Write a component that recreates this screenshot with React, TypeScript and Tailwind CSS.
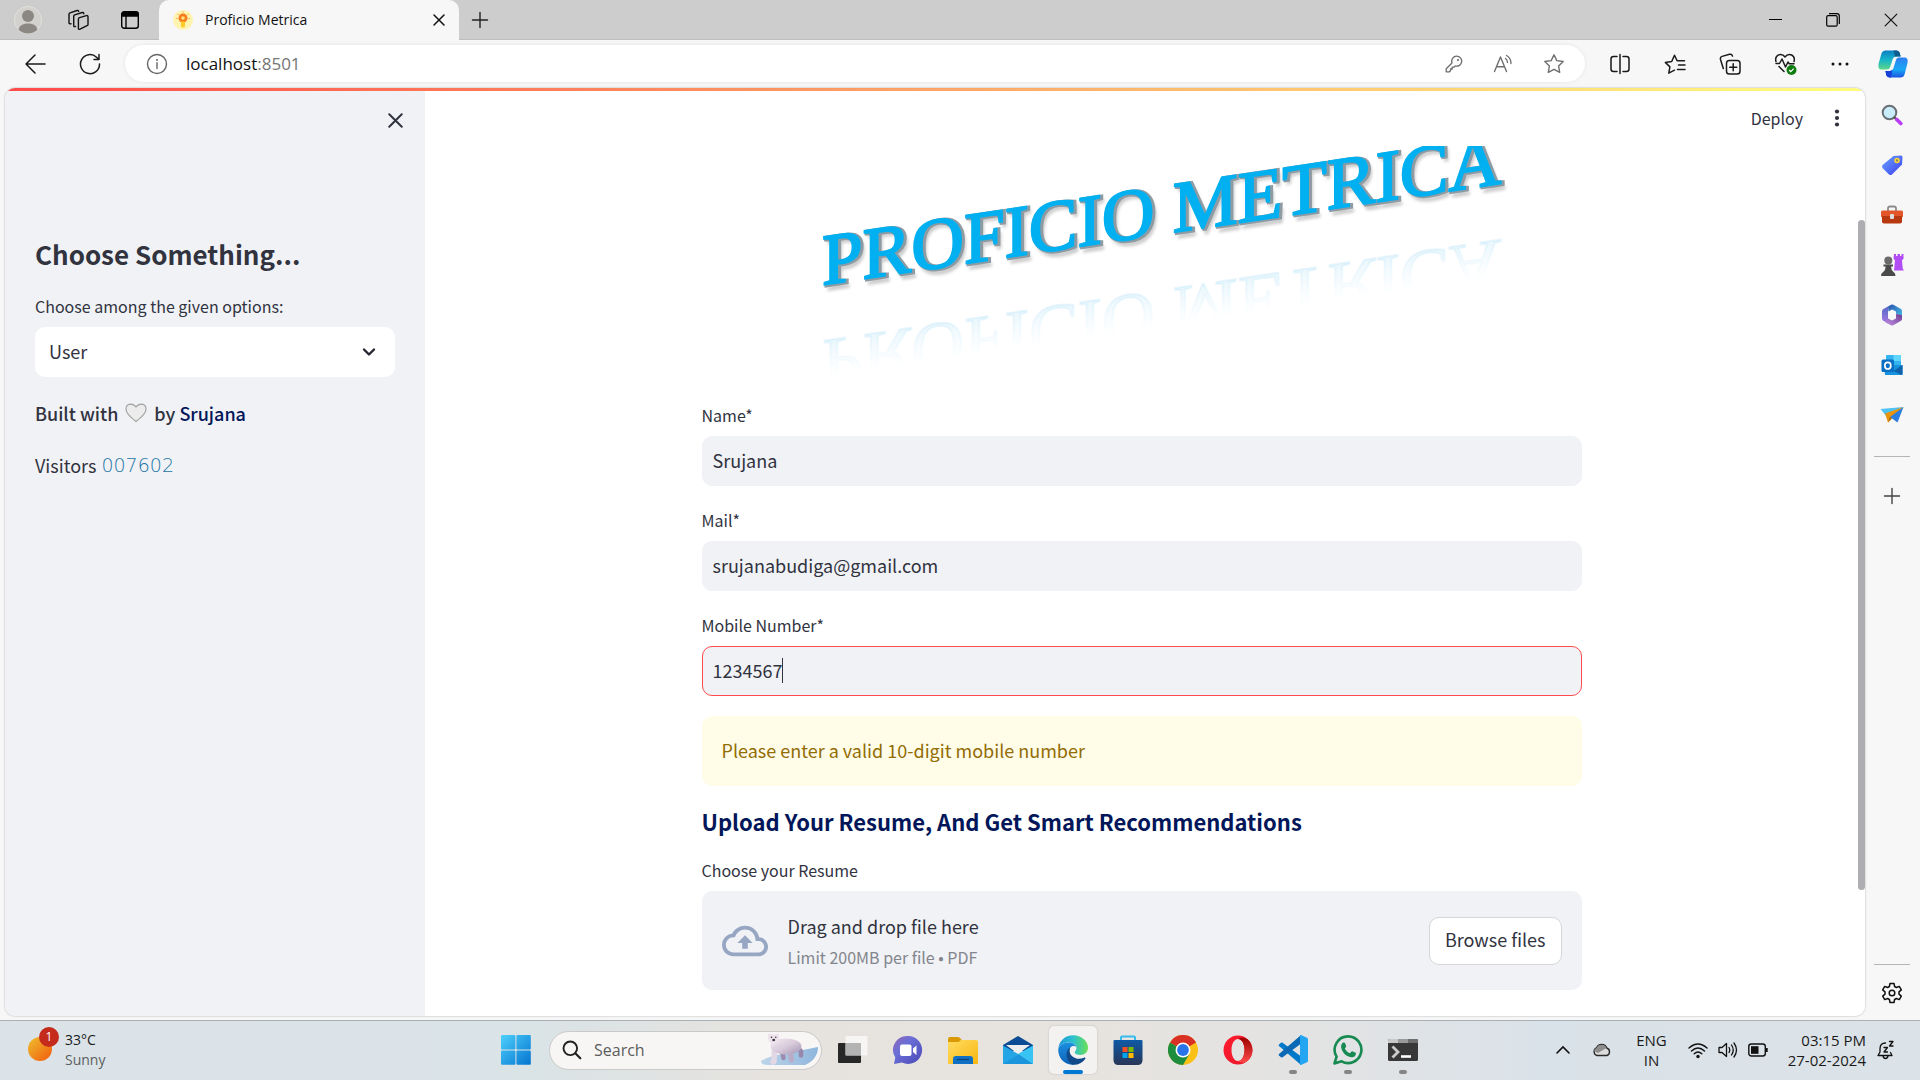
import React, { ReactNode } from "react";

type IconProps = { className?: string };

function Svg({ size, vb, label, className = "", children }: { size: number; vb?: string; label?: string; className?: string; children: ReactNode }) {
  return (
    <svg width={size} height={size} viewBox={vb ?? "0 0 24 24"} fill="none" className={"shrink-0 " + className} role={label ? "img" : undefined} aria-label={label} aria-hidden={label ? undefined : true}>
      {children}
    </svg>
  );
}

/* ---------- browser chrome ---------- */

function Avatar() {
  return (
    <Svg size={28} vb="0 0 28 28">
      <circle cx="14" cy="14" r="13.5" fill="#d3d1cd" stroke="#e2e0dc" />
      <circle cx="14" cy="10" r="6" fill="#8b8783" />
      <path d="M4.500 23.500C6 18.800 9.500 17.500 14 17.500S22 18.800 23.500 23.500A13.300 13.300 0 0 1 4.500 23.500Z" fill="#8b8783" />
    </Svg>
  );
}

function WorkspacesIcon() {
  return (
    <Svg size={22} vb="0 0 22 22">
      <g stroke="#111" strokeWidth="1.400" strokeLinejoin="round" strokeLinecap="round">
        <path d="M12.500 8.600 19.500 6.600q1.500-.3 1.500 1.200v7.600q0 1-1 1.300l-7 3.500q-1.600.6-1.600-1V10q0-1 1.100-1.400Z" />
        <path d="M8.500 17.500q-1.800.6-1.800-1V7.200q0-1 1-1.400l7.500-2.300q1.500-.3 1.600 1.200" />
        <path d="M4 14.800q-2 .4-2-1.100V5.200q0-1 1-1.400L10 1.500q1.400-.3 1.700.9" />
      </g>
    </Svg>
  );
}

function TabActionsIcon() {
  return (
    <Svg size={20} vb="0 0 20 20">
      <rect x="1.700" y="1.700" width="16.600" height="16.600" rx="2.500" stroke="#000" strokeWidth="1.400" />
      <path d="M1.500 6.800V4Q1.500 1.500 4 1.500h12q2.500 0 2.500 2.500v2.800Z" fill="#000" />
      <path d="M6 6v12" stroke="#000" strokeWidth="1.400" />
    </Svg>
  );
}

function BulbFavicon() {
  return (
    <Svg size={20} vb="0 0 20 20">
      <circle cx="10" cy="10" r="10" fill="#fff3b0" />
      <circle cx="10" cy="8" r="4.500" fill="#f57c1f" />
      <path d="M8 11.500h4v4.500q0 1.500-2 1.500t-2-1.500Z" fill="#ffc928" />
      <circle cx="10" cy="8" r="1.800" fill="#ffe27a" />
      <path d="M10 1.500v1M4.500 4l.8.8M15.500 4l-.8.8M3.500 8.500h1M15.500 8.500h1" stroke="#f57c1f" />
    </Svg>
  );
}

function CloseIcon({ size, w = 1.5, color = "#111" }: { size: number; w?: number; color?: string }) {
  return (
    <Svg size={size} vb="0 0 12 12">
      <path d="M1 1l10 10M11 1L1 11" stroke={color} strokeWidth={w} strokeLinecap="round" />
    </Svg>
  );
}

function PlusIcon({ color = "#222" }: { color?: string }) {
  return (
    <Svg size={18} vb="0 0 18 18">
      <path d="M9 1.500v15M1.500 9h15" stroke={color} strokeWidth="1.400" strokeLinecap="round" />
    </Svg>
  );
}

function BackIcon() {
  return (
    <Svg size={22} vb="0 0 22 22">
      <path d="M11 2 2 11l9 9M2 11h19" stroke="#1b1b1b" strokeWidth="1.500" strokeLinecap="round" strokeLinejoin="round" />
    </Svg>
  );
}

function ReloadIcon() {
  return (
    <Svg size={22} vb="0 0 22 22">
      <path d="M20.500 11A9.500 9.500 0 1 1 17.500 4.200L20 6.500M20 1.500v5h-5" stroke="#1b1b1b" strokeWidth="1.500" strokeLinecap="round" strokeLinejoin="round" />
    </Svg>
  );
}

function InfoIcon() {
  return (
    <Svg size={22} vb="0 0 22 22">
      <circle cx="11" cy="11" r="9.500" stroke="#666" strokeWidth="1.400" />
      <path d="M11 9.800V15.500" stroke="#666" strokeWidth="1.400" strokeLinecap="round" />
      <circle cx="11" cy="7" r="1" fill="#666" />
    </Svg>
  );
}

function KeyIcon() {
  return (
    <Svg size={18} vb="0 0 18 18">
      <path d="M11.700 1.200a5 5 0 1 1-1.400 9.800L9 12.200H7.200V14H5.500v1.700L4.500 16.800H1.200V13.800L7 8a5 5 0 0 1 4.700-6.800Z" stroke="#6e6e6e" strokeWidth="1.300" strokeLinejoin="round" />
      <circle cx="13" cy="5" r="1.100" fill="#6e6e6e" />
    </Svg>
  );
}

function ReadAloudIcon() {
  return (
    <Svg size={20} vb="0 0 20 20">
      <path d="M1.500 17.500 7.500 3l6 14.500M3.500 12.800h8" stroke="#6e6e6e" strokeWidth="1.400" strokeLinecap="round" strokeLinejoin="round" />
      <path d="M12.500 4.500q2 1.500 2 4M13.500 1.500q4.500 2.500 4.500 8" stroke="#6e6e6e" strokeWidth="1.300" strokeLinecap="round" />
    </Svg>
  );
}

function StarIcon() {
  return (
    <Svg size={22} vb="0 0 22 22">
      <path d="m11 1.800 2.800 5.800 6.400.9-4.600 4.500 1.100 6.300-5.700-3-5.700 3 1.100-6.300L1.800 8.500l6.400-.9Z" stroke="#6e6e6e" strokeWidth="1.400" strokeLinejoin="round" />
    </Svg>
  );
}

function SplitIcon() {
  return (
    <Svg size={22} vb="0 0 22 22">
      <g stroke="#1b1b1b" strokeWidth="1.500" strokeLinecap="round">
        <path d="M8 3.500H4.500q-2.500 0-2.500 2.500v10q0 2.500 2.500 2.500H8M14 3.500h3.500q2.500 0 2.500 2.500v10q0 2.500-2.500 2.500H14M11 1.500v19" />
      </g>
    </Svg>
  );
}

function FavoritesIcon() {
  return (
    <Svg size={22} vb="0 0 22 22">
      <g stroke="#1b1b1b" strokeWidth="1.500" strokeLinecap="round" strokeLinejoin="round">
        <path d="m10.500 17.200-5.700 3 1.100-6.300L1.300 9.400l6.400-.9 2.800-6.200 2.600 5.500h7.400M14.500 12h6.500M13.500 16.500h7.500" />
      </g>
    </Svg>
  );
}

function CollectionsIcon() {
  return (
    <Svg size={22} vb="0 0 22 22">
      <g stroke="#1b1b1b" strokeWidth="1.500" strokeLinecap="round" strokeLinejoin="round">
        <rect x="7.500" y="7.500" width="13.500" height="13.500" rx="2.800" />
        <path d="M14.200 10.800v7M10.700 14.300h7M4.300 15.500 1.500 6.500q-.6-2.400 1.600-3.100L10.500 1.300q2.300-.6 3 1.800" />
      </g>
    </Svg>
  );
}

function HealthIcon() {
  return (
    <Svg size={24} vb="0 0 24 24">
      <path d="M2 9.500C.8 5.500 3.200 2.500 6.500 2.500c2 0 3.500 1 4.500 2.500 1-1.500 2.500-2.500 4.500-2.500 3.300 0 5.700 3 4.500 7M5 14.500l5 5M2 11.500h3.500L8 7l3.500 8L14 10l1.200 1.800H20" stroke="#1b1b1b" strokeWidth="1.500" strokeLinecap="round" strokeLinejoin="round" />
      <circle cx="17.500" cy="18" r="5" fill="#107c10" />
      <path d="m15.200 18 1.600 1.600 2.900-2.900" stroke="#fff" strokeWidth="1.200" />
    </Svg>
  );
}

function CopilotIcon() {
  return (
    <Svg size={32} vb="0 0 32 32" label="Copilot">
      <defs>
        <linearGradient id="cpA" x1="0" y1="0" x2="0" y2="1"><stop stopColor="#0b7fc4" /><stop offset=".5" stopColor="#16b5c8" /><stop offset="1" stopColor="#5fd68a" /></linearGradient>
        <linearGradient id="cpB" x1="0" y1="0" x2="0" y2="1"><stop stopColor="#2f7ff0" /><stop offset=".6" stopColor="#19a8f5" /><stop offset="1" stopColor="#1d55e0" /></linearGradient>
      </defs>
      <path d="M8.500 2.500H19q3 0 3.800 2.700l.8 3.300H19.500q-3 0-4 3l-2.300 7.500q-.8 2.500-3.200 2.500H4.500Q.5 21.500 1.500 16L4.300 6Q5.300 2.500 8.500 2.500Z" fill="url(#cpA)" />
      <path d="M16.500 2.500H19q3 0 3.800 2.700l.8 3.300H18Z" fill="#0d5c8c" />
      <path d="M23.500 29.500H13q-3 0-3.800-2.700L8.400 23h4.100q3 0 4-3l2.300-7.500q.8-3 3.200-3h5.500q4 0 3 5.500l-2.800 11q-1 3.500-4.200 3.500Z" fill="url(#cpB)" />
      <path d="M8.400 23h4.100q1.800 0 3-1.500L14 29.500h-1q-3 0-3.800-2.700Z" fill="#1741d8" />
    </Svg>
  );
}

/* ---------- edge sidebar ---------- */

function MagnifierColor() {
  return (
    <Svg size={22} vb="0 0 22 22" label="Search">
      <circle cx="8.500" cy="8.500" r="6.800" fill="#c9ecfb" stroke="#6a6f75" strokeWidth="2" />
      <path d="m13 13 3 3" stroke="#555" strokeWidth="2.400" />
      <path d="m15.800 15.500 4 4" stroke="#b83df5" strokeWidth="3.600" strokeLinecap="round" />
    </Svg>
  );
}
function TagColor() {
  return (
    <Svg size={22} vb="0 0 22 22" label="Shopping">
      <defs><linearGradient id="tg" x1="0" y1="0" x2="1" y2="1"><stop stopColor="#6aa5ff" /><stop offset="1" stopColor="#3d3dee" /></linearGradient></defs>
      <path d="M12.500 2 20 1.500q1.500 0 1.500 1.500L21 10.500 11 20.500q-1.500 1-3 0L1.500 14q-1-1.500 0-3Z" fill="url(#tg)" />
      <circle cx="16" cy="6.500" r="2" fill="#8a8a5e" stroke="#ffd43b" strokeWidth="1.600" />
    </Svg>
  );
}
function ToolboxColor() {
  return (
    <Svg size={24} vb="0 0 24 24" label="Tools">
      <path d="M8 8V5.500Q8 3.500 10 3.500h4q2 0 2 2V8" stroke="#8b8b8b" strokeWidth="1.800" />
      <rect x="1" y="7.500" width="22" height="7" rx="1.500" fill="#e2562a" />
      <path d="M2 13h20v5.500q0 2-2 2H4q-2 0-2-2Z" fill="#b8380f" />
      <rect x="10" y="11" width="4" height="5" rx="1" fill="#ddd" />
    </Svg>
  );
}
function ChessColor() {
  return (
    <Svg size={24} vb="0 0 24 24" label="Games">
      <path d="M14 1h2v2h1.500V1h2.500v2h1.500V1h2v5l-1.500 1 .7 8.500 1.300 2H14l1-10-1.500-2Z" fill="#b14df2" />
      <circle cx="8.300" cy="7.500" r="4" fill="#6b6b6b" />
      <path d="M3.500 11.500h9.500v2h-2q.2 4 2.500 5.500 2 1 2 4H1q0-3 2.200-4Q5.500 17.500 5.700 13.500H3.500Z" fill="#4a4a4a" />
    </Svg>
  );
}
function M365Color() {
  return (
    <Svg size={22} vb="0 0 22 22" label="Microsoft 365">
      <defs>
        <linearGradient id="ma" x1="0" y1="0" x2="1" y2="1"><stop stopColor="#2b4fae" /><stop offset="1" stopColor="#45c3e8" /></linearGradient>
        <linearGradient id="mb" x1="0" y1="0" x2="0" y2="1"><stop stopColor="#5668c9" /><stop offset="1" stopColor="#a47be0" /></linearGradient>
        <linearGradient id="mc" x1="1" y1="0" x2="0" y2="1"><stop stopColor="#6d3c94" /><stop offset="1" stopColor="#c192e8" /></linearGradient>
      </defs>
      <path d="M7 2.500 10 .8q1.200-.6 2.400 0L20 5q1 .8 1 2v6l-6-3.500V7.600L11 5.600 7.500 7.500Z" fill="url(#ma)" />
      <path d="M7 2.500 2 5.200Q1 6 1 7.200V14.500q0 1.200 1 2l5 3v-12Z" fill="url(#mb)" />
      <path d="M21 11v4q0 1.200-1 1.800l-7.700 4.500q-1.200.6-2.400 0L4 18l3.200-3.400 3.800 2 4-2V10Z" fill="url(#mc)" />
    </Svg>
  );
}
function OutlookColor() {
  return (
    <Svg size={22} vb="0 0 22 22" label="Outlook">
      <rect x="5" y="1" width="15" height="12" rx="1" fill="#33b3f0" />
      <path d="M12.500 1H19q1 0 1 1v5h-7.500Z" fill="#5fd6fb" />
      <path d="M3 11h18.500v9q0 1-1 1H4Z" fill="#1793dd" />
      <path d="m21.500 11-9 6 8.500 4q.5 0 .5-1Z" fill="#0e62ab" />
      <rect x=".5" y="5.500" width="12.500" height="12.500" rx="1.500" fill="#0a6ec4" />
      <ellipse cx="6.800" cy="11.700" rx="3" ry="3.300" stroke="#fff" strokeWidth="1.700" />
    </Svg>
  );
}
function PlaneColor() {
  return (
    <Svg size={24} vb="0 0 24 24" label="Drop">
      <path d="M.5 6 23.500 4 7 14Z" fill="#4cc2f5" />
      <path d="M23.500 4 5 10.500l3 9Z" fill="#e8940c" />
      <path d="m23.500 4-6 15.500L10 14Z" fill="#2a7de1" />
      <path d="m8 19.500 3.500-4L10 14Z" fill="#a5640a" />
    </Svg>
  );
}
function GearIcon() {
  return (
    <Svg size={24} vb="0 0 24 24">
      <path d="M10 2.500h4l.6 3 1.800 1 2.900-1.100 2 3.500-2.300 2v2.200l2.300 2-2 3.500-2.900-1.100-1.800 1-.6 3h-4l-.6-3-1.800-1-2.900 1.100-2-3.500 2.300-2v-2.200l-2.300-2 2-3.500 2.900 1.100 1.800-1Z" stroke="#111" strokeWidth="1.500" strokeLinejoin="round" />
      <circle cx="12" cy="12" r="2.800" stroke="#111" strokeWidth="1.500" />
    </Svg>
  );
}

/* ---------- taskbar icons ---------- */

function WindowsLogo() {
  return (
    <Svg size={30} vb="0 0 30 30">
      <defs><linearGradient id="wn" gradientUnits="userSpaceOnUse" x1="0" y1="0" x2="30" y2="30"><stop stopColor="#4cd0fb" /><stop offset="1" stopColor="#0573d0" /></linearGradient></defs>
      <g fill="url(#wn)"><rect x="0" y="0" width="14.400" height="14.400" rx="1" /><rect x="15.400" y="0" width="14.400" height="14.400" rx="1" /><rect x="0" y="15.400" width="14.400" height="14.400" rx="1" /><rect x="15.400" y="15.400" width="14.400" height="14.400" rx="1" /></g>
    </Svg>
  );
}
function PolarBear() {
  return (
    <svg width="58" height="34" viewBox="0 0 58 34" role="img" aria-label="Polar bear" className="shrink-0">
      <defs>
        <linearGradient id="pb" x1="0" y1="0" x2="1" y2="1"><stop stopColor="#f3eaf0" /><stop offset=".5" stopColor="#d9cbdb" /><stop offset="1" stopColor="#a394b5" /></linearGradient>
        <linearGradient id="ice" x1="0" y1="0" x2="1" y2="0"><stop stopColor="#bcd5ea" /><stop offset="1" stopColor="#8fb6dc" /></linearGradient>
      </defs>
      <path d="M0 28Q8 23 22 21L57 14Q57 26 44 32H6Q0 32 0 28Z" fill="url(#ice)" />
      <g strokeLinecap="round" strokeLinejoin="round">
        <path d="M21 18l1.500 7" stroke="#9c8db0" strokeWidth="4.500" />
        <path d="M36 14l4 4v4.500" stroke="#9788ab" strokeWidth="4.500" />
        <path d="M13.500 16l-.5 12.500-1 .5" stroke="#e2d7e4" strokeWidth="5.500" />
        <path d="M32 16l-2.500 5.500 1 5.500" stroke="#b9abc6" strokeWidth="5" />
      </g>
      <ellipse cx="25" cy="13.500" rx="15.500" ry="8" fill="url(#pb)" />
      <path d="M7 2.500Q6.800.5 8.500.5T10.500 1.500q2-.8 4.500 0Q15.500.2 17 .5q1.500.5 1 2.200.5 3.500-.5 6.300L12 12 9 9.500Q6.500 7 7 2.500Z" fill="#eee3ec" />
      <circle cx="10.500" cy="4.300" r=".8" fill="#333" /><circle cx="14.800" cy="4.300" r=".8" fill="#333" /><ellipse cx="12.700" cy="7" rx="1.500" ry="1.200" fill="#443c48" />
    </svg>
  );
}
function TaskView() {
  return (
    <Svg size={30} vb="0 0 30 30">
      <rect x="0" y="8" width="23" height="20" rx="1" fill="#272727" />
      <rect x="7.500" y="1" width="22" height="19.500" rx="1" fill="#fbfbfb" fillOpacity=".75" />
      <path d="M7.500 8H23v12.500H7.500Z" fill="#b3b3b3" />
    </Svg>
  );
}
function ChatApp() {
  return (
    <Svg size={30} vb="0 0 30 30">
      <defs><linearGradient id="ch" x1="0" y1="0" x2="1" y2="1"><stop stopColor="#9163b5" /><stop offset=".35" stopColor="#6c6fd6" /><stop offset="1" stopColor="#4a49b8" /></linearGradient></defs>
      <path d="M15 1a14 14 0 1 1-6 26.600L1 29l1.300-6.500A14 14 0 0 1 15 1Z" fill="url(#ch)" />
      <rect x="7" y="9.500" width="11.500" height="11.500" rx="2" fill="#fff" /><path d="m20 13.500 3.500-3v9.500L20 17Z" fill="#fff" />
    </Svg>
  );
}
function FolderApp() {
  return (
    <Svg size={30} vb="0 0 30 30">
      <defs><linearGradient id="fd" x1="0" y1="0" x2="1" y2="1"><stop stopColor="#ffdc62" /><stop offset="1" stopColor="#f8b70f" /></linearGradient></defs>
      <path d="M0 4q0-2 2-2h8q1.500 0 2.500 1.500L14 5.500V12H0Z" fill="#d99a06" />
      <path d="M0 7h10.500l2.500-2H28q2 0 2 2v21q0 1-1 1H1q-1 0-1-1Z" fill="url(#fd)" />
      <path d="M5 29v-5q0-3 3-3h14q3 0 3 3v5Z" fill="#1070c4" /><path d="M9 24.500h12" stroke="#06427c" strokeWidth="1.200" />
    </Svg>
  );
}
function MailApp() {
  return (
    <Svg size={30} vb="0 0 30 30">
      <path d="M0 10 15 1l15 9v6H0Z" fill="#0c4c94" /><path d="M3 10h24L15 19Z" fill="#eee" />
      <path d="M0 10.500 16 19.500 30 29H0Z" fill="#24a5e6" /><path d="M30 10.500V29L15 19Z" fill="#37c3f3" /><path d="M16 19.500 30 29H0Z" fill="#1b95dc" />
    </Svg>
  );
}
function EdgeApp() {
  return (
    <Svg size={30} vb="0 0 30 30">
      <defs>
        <linearGradient id="e1" x1="0" y1=".5" x2="1" y2=".5"><stop stopColor="#2196dc" /><stop offset=".5" stopColor="#2cc1cf" /><stop offset="1" stopColor="#6adf52" /></linearGradient>
        <linearGradient id="e2" x1="0" y1="0" x2="0" y2="1"><stop stopColor="#1b8fe0" /><stop offset="1" stopColor="#0f62b8" /></linearGradient>
      </defs>
      <path d="M.3 14C.8 6 7 .2 15 .2c8.500 0 15 5.800 15 12.300 0 4.600-3.500 7.500-7.500 7.500-3.700 0-5.800-1.500-5.800-2.800 0-.8 1.800-1.700 1.800-4.200 0-2.800-3-5.500-7.500-5.500C6 7.500 1.500 10 .3 14Z" fill="url(#e1)" />
      <path d="M.2 14.500C1 10.500 5.500 7.600 10.800 7.500c3.800 0 6.700 2 7.500 4.300-1.300-1.300-4-1.300-5.800.5-2.600 2.700-1.800 12.200 5.500 15.200-1.500 2.300-3 2.300-4 2.200C5.500 29 .2 23 .2 14.500Z" fill="url(#e2)" />
      <path d="M12.500 12.300c-5.500 3-5.700 12.500 1.500 17.300 5 .8 10-1.300 13.200-5.600.8-1-.2-1.800-1.200-1.300-6.500 3-13.500-.7-14.300-5.700-.2-1.700 0-3.500.8-4.700Z" fill="#114a8b" />
    </Svg>
  );
}
function StoreApp() {
  return (
    <Svg size={30} vb="0 0 30 30">
      <defs><linearGradient id="st" x1="0" y1="0" x2="0" y2="1"><stop stopColor="#0e5aa5" /><stop offset="1" stopColor="#2a3657" /></linearGradient></defs>
      <path d="M8 7V2.500q0-1 1-1h12q1 0 1 1V7" stroke="#35bdf0" strokeWidth="2" />
      <path d="M.5 6q0-1 1-1h27q1 0 1 1v19q0 5-5 5h-19q-5 0-5-5Z" fill="url(#st)" />
      <path d="M9.500 12h5v5h-5Z" fill="#f25022" /><path d="M15.500 12h5v5h-5Z" fill="#7fba00" /><path d="M9.500 18h5v5h-5Z" fill="#00a4ef" /><path d="M15.500 18h5v5h-5Z" fill="#ffb900" />
    </Svg>
  );
}
function ChromeApp() {
  return (
    <Svg size={30} vb="0 0 30 30">
      <circle cx="15" cy="15" r="15" fill="#fbc116" />
      <path d="M15 15 2 7.500A15 15 0 0 1 28 7.500Z" fill="#d93025" /><path d="M15 7.500h13L26 5 15 0Z" fill="#d93025" />
      <path d="M2 7.500A15 15 0 0 0 15 30l6.500-11.300L15 15Z" fill="#1e8e3e" />
      <circle cx="15" cy="15" r="7.500" fill="#fff" /><circle cx="15" cy="15" r="5.900" fill="#2a74ea" />
    </Svg>
  );
}
function OperaApp() {
  return (
    <Svg size={30} vb="0 0 30 30">
      <defs><linearGradient id="op" x1="0" y1="0" x2="1" y2="1"><stop stopColor="#ff1b2d" /><stop offset="1" stopColor="#e8172a" /></linearGradient>
      <linearGradient id="oq" x1="0" y1="0" x2="0" y2="1"><stop stopColor="#9c0000" /><stop offset="1" stopColor="#ff4b4b" /></linearGradient></defs>
      <path fillRule="evenodd" d="M15 .5a14.500 14.500 0 1 1 0 29 14.500 14.500 0 0 1 0-29Zm0 3.500c-4 0-6.500 5-6.500 11S11 26 15 26s6.500-5 6.500-11S19 4 15 4Z" fill="url(#op)" />
      <path d="M15 4c3-2 7-1.500 9.500.3A14.500 14.500 0 0 1 24.500 26C21 28.200 18 28 15 26c4 0 6.500-5 6.500-11S19 4 15 4Z" fill="url(#oq)" />
    </Svg>
  );
}
function CodeApp() {
  return (
    <Svg size={30} vb="0 0 30 30">
      <path d="M1 9.500 3 7.800q.8-.5 1.600 0L22.500 21v8.500L1 11q-.8-.8 0-1.500Z" fill="#0179cb" />
      <path d="M1 20.500 3 22.200q.8.500 1.600 0L22.500 9V.5L1 19q-.8.800 0 1.500Z" fill="#0b68b4" />
      <path d="M22 0q.8-.2 1.500.2L29 2.700q1 .5 1 1.500v21.600q0 1-1 1.500l-5.500 2.500q-.7.300-1.500.1Z" fill="#24a5f2" />
    </Svg>
  );
}
function WhatsAppApp() {
  return (
    <Svg size={30} vb="0 0 30 30">
      <path d="M15.200 1.400A13.300 13.300 0 1 1 8.600 26.300L1.500 28.400 3.600 21.600A13.300 13.300 0 0 1 15.200 1.400Z" stroke="#168a52" strokeWidth="2.600" strokeLinejoin="round" />
      <path d="M10.300 7.500c.8-.3 1.500 0 1.800.8l1 2.500c.2.500 0 1-.3 1.400l-1 1.200c1.300 2.300 2.800 3.800 5.200 4.900l1.400-1.600c.4-.4.800-.5 1.300-.3l2.500 1.200c.6.300.8.700.7 1.400-.4 2.300-2.400 3.600-4.600 3.200C12.500 21.200 9 16.800 8.200 12.700c-.4-2.300.5-4.500 2.100-5.200Z" fill="#168a52" />
    </Svg>
  );
}
function TerminalApp() {
  return (
    <Svg size={30} vb="0 0 30 30">
      <rect y="4" width="30" height="22" rx="1.500" fill="#383838" />
      <path d="M1.500 4H10v4H0V5.500Q0 4 1.500 4Z" fill="#c9c9c9" /><path d="M10 4h10v4H10Z" fill="#9a9a9a" /><path d="M20 4h8.500q1.500 0 1.500 1.500V8H20Z" fill="#6d6d6d" />
      <path d="m4.500 11.500 5.500 5.500-5.500 5.500" stroke="#ccc" strokeWidth="2.800" /><path d="M13 21.500h10" stroke="#fff" strokeWidth="2.600" />
    </Svg>
  );
}

/* ---------- tray ---------- */

function TrayCloud() {
  return (
    <Svg size={20} vb="0 0 20 20">
      <path d="M5 15.500a4 4 0 0 1-.5-7.500A5.500 5.500 0 0 1 14.800 8a4 4 0 0 1 .2 7.500Z" fill="#dcdcdc" stroke="#2a2a2a" strokeWidth="1.400" />
      <path d="M4.500 8A5.500 5.500 0 0 1 14.500 8L6 13 2 11Q2.500 8.500 4.500 8Z" fill="#8d8d8d" />
    </Svg>
  );
}
function WifiIcon() {
  return (
    <Svg size={20} vb="0 0 20 20">
      <path d="M1 8q9-8 18 0M3.500 11q6.500-6 13 0M6.200 13.800q3.800-3.500 7.600 0" stroke="#111" strokeWidth="1.400" strokeLinecap="round" /><circle cx="10" cy="16.500" r="1.700" fill="#111" />
    </Svg>
  );
}
function VolumeIcon() {
  return (
    <Svg size={20} vb="0 0 20 20">
      <path d="M1 7.500h3L8.500 3.500v13L4 12.500H1ZM11 7.500q1.500 2.500 0 5M13.500 5q3.500 5 0 10M16 3q5 7 0 14" stroke="#111" strokeWidth="1.300" strokeLinecap="round" strokeLinejoin="round" />
    </Svg>
  );
}
function BatteryIcon() {
  return (
    <Svg size={20} vb="0 0 20 20">
      <rect x=".8" y="4" width="16.500" height="12" rx="2.500" stroke="#111" strokeWidth="1.400" /><rect x="3" y="6.200" width="7.500" height="7.600" fill="#111" /><path d="M18.800 8v4" stroke="#111" strokeWidth="1.800" />
    </Svg>
  );
}
function BellIcon() {
  return (
    <Svg size={20} vb="0 0 20 20">
      <path d="M9.500 3Q4 3 4 9v3l-2 3.500h14L14.500 12.500M7 16q.5 2.500 2.500 2.500T12 16M8 7.500h3.500L8 12h3.500M13.500 1.500H17L13.500 6H17" stroke="#111" strokeWidth="1.300" strokeLinecap="round" strokeLinejoin="round" />
    </Svg>
  );
}

/* ---------- app page ---------- */

function WordArt() {
  const face = '"Liberation Serif", serif';
  return (
    <svg viewBox="0 0 880 235" className="block w-full" role="img" aria-label="PROFICIO METRICA">
      <defs>
        <linearGradient id="reflect" gradientUnits="userSpaceOnUse" x1="0" y1="0" x2="0" y2="-38">
          <stop stopColor="#a6dcf5" stopOpacity=".24" />
          <stop offset="1" stopColor="#cfeefb" stopOpacity="0" />
        </linearGradient>
        <filter id="soft" x="-5%" y="-20%" width="110%" height="150%">
          <feGaussianBlur stdDeviation="1.500" />
        </filter>
      </defs>
      <g fontFamily={face} fontSize="73" strokeLinejoin="miter">
        <g transform="translate(120 140) skewY(-8.500)">
          <text x="4" y="5" fill="#9b9b9b" stroke="#9b9b9b" strokeWidth="2" opacity=".5" filter="url(#soft)" aria-hidden="true">PROFICIO METRICA</text>
          <text x="2" y="0" fill="#00b0f0" stroke="#8f9ba3" strokeWidth="4" aria-hidden="true">PROFICIO METRICA</text>
          <text x="0" y="-1" fill="#00b0f0" stroke="#00b0f0" strokeWidth="2">PROFICIO METRICA</text>
        </g>
        <g transform="translate(120 195) skewY(-8.500) scale(1 -1)">
          <text x="0" y="0" fill="url(#reflect)" stroke="url(#reflect)" strokeWidth="2" aria-hidden="true">PROFICIO METRICA</text>
        </g>
      </g>
    </svg>
  );
}

function Field({ id, label, value, type = "text", active }: { id: string; label: string; value: string; type?: string; active?: boolean }) {
  return (
    <div>
      <label htmlFor={id} className="mb-[7px] block text-[16px] leading-7">{label}</label>
      <div className="relative">
        <input id={id} type={type} defaultValue={value} className={active ? "h-[50px] w-full rounded-[10px] border border-[#ff4b4b] bg-[#f0f2f6] px-2.5 pb-0.5 text-[18px] outline-none" : "h-[50px] w-full rounded-[10px] border border-[#f0f2f6] bg-[#f0f2f6] px-2.5 pb-0.5 text-[18px] outline-none"} />
        {active && <span className="absolute left-[80px] top-3 h-[25px] w-px bg-[#31333f]" />}
      </div>
    </div>
  );
}

const edgeItems = [MagnifierColor, TagColor, ToolboxColor, ChessColor, M365Color, OutlookColor, PlaneColor];
const apps: { name: string; Icon: (p: IconProps) => ReactNode; state?: "active" | "open" }[] = [
  { name: "Task view", Icon: TaskView },
  { name: "Chat", Icon: ChatApp },
  { name: "File Explorer", Icon: FolderApp },
  { name: "Mail", Icon: MailApp },
  { name: "Microsoft Edge", Icon: EdgeApp, state: "active" },
  { name: "Microsoft Store", Icon: StoreApp },
  { name: "Chrome", Icon: ChromeApp },
  { name: "Opera", Icon: OperaApp },
  { name: "Visual Studio Code", Icon: CodeApp, state: "open" },
  { name: "WhatsApp", Icon: WhatsAppApp, state: "open" },
  { name: "Terminal", Icon: TerminalApp, state: "open" },
];

function TitleBar() {
  return (
    <div className="flex h-10 items-center border-b border-[#bdbdbd] bg-[#cdcdcd]">
      <div className="flex w-[159px] items-center justify-between pl-3.5 pr-[19px]">
        <button aria-label="Profile"><Avatar /></button>
        <button aria-label="Workspaces" className="mr-1.5"><WorkspacesIcon /></button>
        <button aria-label="Tab actions"><TabActionsIcon /></button>
      </div>
      <div className="-mb-px flex h-10 w-[300px] items-center rounded-t-[10px] bg-[#f7f7f7] pl-3.5 pr-3.5">
        <BulbFavicon />
        <span className="ml-3 flex-1 text-[14px] leading-5 text-[#111]">Proficio Metrica</span>
        <button aria-label="Close tab"><CloseIcon size={12} /></button>
      </div>
      <button aria-label="New tab" className="ml-3"><PlusIcon /></button>
      <div className="ml-auto flex items-center gap-11 pr-[22px]">
        <button aria-label="Minimize"><Svg size={13} vb="0 0 13 13"><path d="M0 6.500h13" stroke="#000" /></Svg></button>
        <button aria-label="Restore"><Svg size={14} vb="0 0 14 14"><rect x=".7" y="2.700" width="10.500" height="10.500" rx="1.500" stroke="#000" strokeWidth="1.200" /><path d="M3 .7h8q2.300 0 2.300 2.300v8" stroke="#000" strokeWidth="1.200" /></Svg></button>
        <button aria-label="Close window"><CloseIcon size={14} w={1} /></button>
      </div>
    </div>
  );
}

function Toolbar() {
  return (
    <div className="flex h-12 items-center pb-px pl-6 pr-[11px]">
      <button aria-label="Back"><BackIcon /></button>
      <button aria-label="Refresh" className="ml-[33px]"><ReloadIcon /></button>
      <div className="ml-6 flex h-[37px] flex-1 items-center rounded-full bg-white pl-[21px] pr-5 shadow-[0_0_4px_rgba(0,0,0,0.08)]">
        <button aria-label="Site information"><InfoIcon /></button>
        <span className="ml-[18px] flex-1 text-[17px] leading-6 text-[#111]">localhost<span className="text-[#767676]">:8501</span></span>
        <div className="flex items-center gap-[30px]">
          <button aria-label="Passwords"><KeyIcon /></button>
          <button aria-label="Read aloud"><ReadAloudIcon /></button>
          <button aria-label="Add to favorites"><StarIcon /></button>
        </div>
      </div>
      <div className="ml-6 flex items-center gap-[33px]">
        <button aria-label="Split screen"><SplitIcon /></button>
        <button aria-label="Favorites"><FavoritesIcon /></button>
        <button aria-label="Collections"><CollectionsIcon /></button>
        <button aria-label="Browser essentials"><HealthIcon /></button>
        <button aria-label="More"><Svg size={18} vb="0 0 18 18"><circle cx="2" cy="9" r="1.500" fill="#111" /><circle cx="9" cy="9" r="1.500" fill="#111" /><circle cx="16" cy="9" r="1.500" fill="#111" /></Svg></button>
      </div>
      <button aria-label="Copilot" className="ml-7"><CopilotIcon /></button>
    </div>
  );
}

function SidePanel() {
  return (
    <aside className="w-[420px] shrink-0 bg-[#f0f2f6] px-[30px] pt-[17px]">
      <div className="-mr-3 flex justify-end">
        <button aria-label="Close sidebar" className="flex size-6 items-center justify-center"><CloseIcon size={15} w={1.6} color="#31333f" /></button>
      </div>
      <h1 className="mt-[102px] text-[26px] font-bold leading-[40px]">Choose Something...</h1>
      <label htmlFor="role" className="mb-[7px] mt-[18px] block text-[16px] leading-7">Choose among the given options:</label>
      <div className="relative">
        <select id="role" defaultValue="User" className="h-[50px] w-full appearance-none rounded-[10px] bg-white px-3.5 pb-0.5 text-[18px] outline-none">
          <option>User</option>
          <option>Admin</option>
        </select>
        <span className="pointer-events-none absolute right-[19px] top-[18px]">
          <Svg size={14} vb="0 0 14 14"><path d="m2 4.500 5 5 5-5" stroke="#262730" strokeWidth="2.400" strokeLinecap="round" strokeLinejoin="round" /></Svg>
        </span>
      </div>
      <p className="mt-5 flex items-center text-[18px] font-medium leading-8">
        <span>Built with</span>
        <Svg size={22} vb="0 0 22 22" label="white heart" className="mx-[7px]"><path d="M11 19.500Q1 12 1 7q0-4.500 4.500-4.800Q9 2.200 11 5q2-2.800 5.500-2.800Q21 2.500 21 7q0 5-10 12.500Z" fill="#ececec" stroke="#a5a5a5" strokeWidth="1.200" /></Svg>
        <span>by <a href="#srujana" className="text-[#021659]">Srujana</a></span>
      </p>
      <p className="mt-5 flex items-center gap-[5px] text-[18px] leading-8">
        <span>Visitors</span>
        <span className="font-['DejaVu_Sans',sans-serif] text-[19px] font-extralight text-[#1c75a5]">007602</span>
      </p>
    </aside>
  );
}

function MainArea() {
  return (
    <main className="flex min-w-0 flex-1 flex-col bg-white">
      <header className="flex h-[55px] shrink-0 items-center justify-end gap-6 pb-0.5 pr-[18px] text-[16px]">
        <button>Deploy</button>
        <button aria-label="Main menu"><Svg size={20} vb="0 0 20 20"><circle cx="10" cy="3.500" r="2.100" fill="#31333f" /><circle cx="10" cy="10" r="2.100" fill="#31333f" /><circle cx="10" cy="16.500" r="2.100" fill="#31333f" /></Svg></button>
      </header>
      <div className="flex min-h-0 flex-1">
        <div className="min-w-0 flex-1 overflow-hidden">
          <div className="mx-auto flex max-w-[880px] flex-col gap-5">
            <WordArt />
            <Field id="name" label="Name*" value="Srujana" />
            <Field id="mail" label="Mail*" value="srujanabudiga@gmail.com" type="email" />
            <Field id="mobile" label="Mobile Number*" value="1234567" type="tel" active />
            <div role="alert" className="rounded-[10px] bg-[#fffce7] px-5 pb-[22px] pt-5 text-[18px] leading-7 text-[#926c05]">Please enter a valid 10-digit mobile number</div>
            <h2 className="text-[22px] font-bold leading-[30px] text-[#021659]">Upload Your Resume, And Get Smart Recommendations</h2>
            <div>
              <p className="mb-[7px] text-[16px] leading-7">Choose your Resume</p>
              <div className="flex items-center rounded-[10px] bg-[#f0f2f6] px-5 py-[18px]">
                <Svg size={46} vb="0 0 24 24"><path d="M19.350 10.040A7.490 7.490 0 0 0 12 4C9.110 4 6.600 5.640 5.350 8.040A5.994 5.994 0 0 0 0 14c0 3.310 2.690 6 6 6h13c2.760 0 5-2.240 5-5 0-2.640-2.050-4.780-4.650-4.960ZM19 18H6c-2.210 0-4-1.790-4-4s1.790-4 4-4h.710A5.490 5.490 0 0 1 12 6c3.040 0 5.500 2.460 5.500 5.500v.5H19c1.660 0 3 1.340 3 3s-1.340 3-3 3ZM8 13h2.550v3h2.900v-3H16l-4-4-4 4Z" fill="#97a6c3" /></Svg>
                <div className="ml-5 flex-1 pt-0.5">
                  <p className="text-[18px] leading-[31px]">Drag and drop file here</p>
                  <p className="text-[16px] leading-[30px] text-[#83858c]">Limit 200MB per file • PDF</p>
                </div>
                <button className="h-12 rounded-[10px] border border-[#d6d6d9] bg-white px-[15px] pb-0.5 text-[18px]">Browse files</button>
              </div>
            </div>
          </div>
        </div>
        <div className="flex w-[7px] flex-col pb-[126px] pt-[74px]">
          <div className="flex-1 rounded-full bg-[#adadb2]" />
        </div>
      </div>
    </main>
  );
}

function EdgeSidebar() {
  return (
    <nav aria-label="Browser sidebar" className="flex w-[55px] shrink-0 flex-col items-center pr-px pt-[6px]">
      {edgeItems.map((Item, i) => (
        <button key={i} className="flex h-[50px] w-9 items-center justify-center pb-2"><Item /></button>
      ))}
      <div className="mt-3 h-px w-9 bg-[#b5b5b5]" />
      <button aria-label="Customize" className="mt-[30px]"><PlusIcon color="#444" /></button>
      <div className="mb-4 mt-auto h-px w-9 bg-[#b5b5b5]" />
      <button aria-label="Settings" className="mb-[15px]"><GearIcon /></button>
    </nav>
  );
}

function Taskbar() {
  return (
    <footer className="grid h-[60px] shrink-0 grid-cols-[1fr_auto_1fr] items-center border-t border-[#aab1b4] bg-[linear-gradient(90deg,#dbe3e8_0%,#dae3e6_28%,#e6e3df_40%,#e7e3de_54%,#e3e3e3_68%,#dae2e9_80%,#dbe3e8_100%)] pb-px">
      <button className="flex items-center gap-[7px] pl-7 text-left">
        <span className="relative">
          <Svg size={30} vb="0 0 30 30"><defs><linearGradient id="sun" x1="0" y1="0" x2="1" y2="1"><stop stopColor="#eec02f" /><stop offset="1" stopColor="#f2590c" /></linearGradient></defs><circle cx="12" cy="14" r="12" fill="url(#sun)" /></Svg>
          <span className="absolute -top-2 left-[11px] flex size-5 items-center justify-center rounded-full bg-[#c42b1c] text-[12px] text-white">1</span>
        </span>
        <span className="flex flex-col text-[14px] leading-5"><span className="text-[#1a1a1a]">33°C</span><span className="text-[#5c5f61]">Sunny</span></span>
      </button>
      <div className="flex items-center gap-[7px] pl-2">
        <button aria-label="Start" className="mr-[11px]"><WindowsLogo /></button>
        <label className="flex h-[39px] w-[273px] items-center rounded-full border border-[#c9c9c8] bg-[#f7f6f5] pl-3 pr-0.5 text-[16px] text-[#5c5c5c]">
          <Svg size={20} vb="0 0 20 20"><circle cx="8.300" cy="8.300" r="6.800" stroke="#222" strokeWidth="1.900" /><path d="m13.300 13.300 5 5" stroke="#222" strokeWidth="2.200" strokeLinecap="round" /></Svg>
          <input aria-label="Search" placeholder="Search" className="ml-3 min-w-0 flex-1 bg-transparent outline-none placeholder:text-[#5c5c5c]" />
          <PolarBear />
        </label>
        {apps.map(({ name, Icon, state }) => (
          <button key={name} aria-label={name} className={state === "active" ? "relative flex size-12 items-center justify-center rounded-[5px] bg-[#f4f2f0] shadow-[0_0_2px_rgba(0,0,0,0.2)]" : "relative flex size-12 items-center justify-center"}>
            <Icon />
            {state === "active" && <span className="absolute bottom-0 h-1 w-5 rounded-full bg-[#0078d4]" />}
            {state === "open" && <span className="absolute bottom-0 h-1 w-2 rounded-full bg-[#858585]" />}
          </button>
        ))}
      </div>
      <div className="flex items-center justify-end pr-6 text-[15px] leading-5 text-[#1a1a1a]">
        <button aria-label="Show hidden icons"><Svg size={14} vb="0 0 14 14"><path d="m1 10 6-6 6 6" stroke="#111" strokeWidth="1.600" strokeLinecap="round" /></Svg></button>
        <button aria-label="OneDrive" className="ml-[22px]"><TrayCloud /></button>
        <button className="ml-6 flex flex-col items-center"><span>ENG</span><span>IN</span></button>
        <button aria-label="Network, volume and battery" className="ml-[21px] flex gap-2.5"><WifiIcon /><VolumeIcon /><BatteryIcon /></button>
        <button className="ml-5 flex flex-col items-end"><span>03:15 PM</span><span>27-02-2024</span></button>
        <button aria-label="Notifications" className="ml-2.5"><BellIcon /></button>
      </div>
    </footer>
  );
}

export default function App() {
  return (
    <div className="flex h-screen flex-col overflow-hidden bg-[#f7f7f7] font-['Open_Sans',sans-serif]">
      <TitleBar />
      <Toolbar />
      <div className="flex min-h-0 flex-1">
        <div className="mb-1 ml-[5px] flex min-w-0 flex-1 flex-col overflow-hidden rounded-[10px] bg-white font-['Noto_Sans_CJK_JP',sans-serif] text-[#31333f] shadow-[0_0_2px_rgba(0,0,0,0.35)]">
          <div className="h-[3px] shrink-0 bg-[linear-gradient(90deg,#ff4b4b,#fffd80)]" />
          <div className="flex min-h-0 flex-1">
            <SidePanel />
            <MainArea />
          </div>
        </div>
        <EdgeSidebar />
      </div>
      <Taskbar />
    </div>
  );
}
